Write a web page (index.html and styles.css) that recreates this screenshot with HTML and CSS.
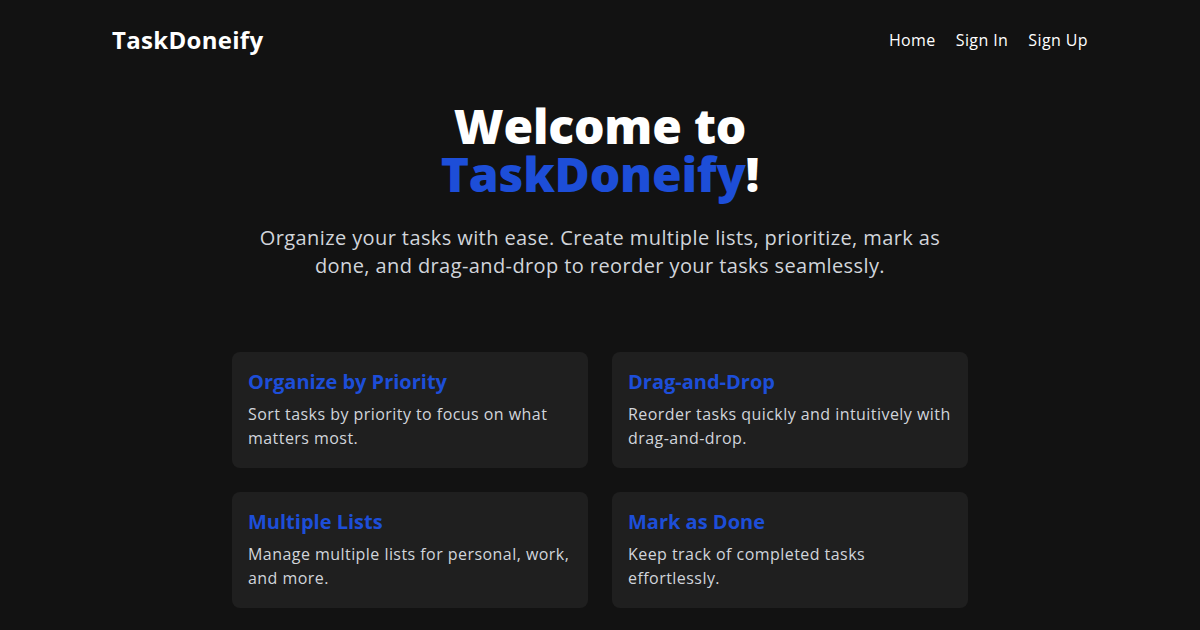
FILE: index.html
```html
<!DOCTYPE html>
<html lang="en">
<head>
<meta charset="utf-8">
<title>TaskDoneify</title>
<link rel="stylesheet" href="styles.css">
</head>
<body>
<header class="header">
  <div class="logo">TaskDoneify</div>
  <nav class="nav">
    <a href="#">Home</a>
    <a href="#">Sign In</a>
    <a href="#">Sign Up</a>
  </nav>
</header>
<main class="hero">
  <h1 class="title"><span class="line">Welcome to</span><span class="line"><span class="brand">TaskDoneify</span>!</span></h1>
  <p class="lead">Organize your tasks with ease. Create multiple lists, prioritize, mark as done, and drag-and-drop to reorder your tasks seamlessly.</p>
  <section class="features">
    <div class="card">
      <h2>Organize by Priority</h2>
      <p>Sort tasks by priority to focus on what matters most.</p>
    </div>
    <div class="card">
      <h2>Drag-and-Drop</h2>
      <p>Reorder tasks quickly and intuitively with drag-and-drop.</p>
    </div>
    <div class="card">
      <h2>Multiple Lists</h2>
      <p>Manage multiple lists for personal, work, and more.</p>
    </div>
    <div class="card">
      <h2>Mark as Done</h2>
      <p>Keep track of completed tasks effortlessly.</p>
    </div>
  </section>
</main>
</body>
</html>
```
FILE: styles.css
```css
* { box-sizing: border-box; }
html, body { margin: 0; padding: 0; }
body {
  background: #121212;
  color: #ffffff;
  font-family: "Open Sans", "DejaVu Sans", sans-serif;
  width: 1200px;
  height: 630px;
  overflow: hidden;
}
.header {
  width: 976px;
  margin: 0 auto;
  padding-top: 24px;
  height: 64px;
  display: flex;
  justify-content: space-between;
  align-items: flex-start;
}
.logo {
  font-size: 24px;
  font-weight: 700;
  line-height: 32px;
  letter-spacing: 0.3px;
}
.nav {
  display: flex;
  gap: 20px;
  line-height: 32px;
}
.nav a {
  color: #ffffff;
  text-decoration: none;
  font-size: 16px;
  letter-spacing: 0.4px;
}
.hero {
  display: flex;
  flex-direction: column;
  align-items: center;
  padding-top: 38px;
}
.title {
  margin: 0;
  font-size: 48px;
  font-weight: 800;
  text-align: center;
  letter-spacing: -0.2px;
  display: flex;
  flex-direction: column;
  align-items: center;
}
.title .line {
  display: block;
  line-height: 48px;
  height: 48px;
}
.brand { color: #1d4ed8; }
.lead {
  margin: 26px 0 0;
  width: 710px;
  text-align: center;
  font-size: 20px;
  line-height: 28px;
  color: #d1d5db;
  letter-spacing: 0.4px;
}
.features {
  margin-top: 72px;
  display: grid;
  grid-template-columns: 356px 356px;
  gap: 24px;
}
.card {
  background: #1f1f1f;
  border-radius: 8px;
  padding: 16px;
  height: 116px;
}
.card h2 {
  margin: 0 0 6px;
  font-size: 20px;
  line-height: 28px;
  font-weight: 700;
  color: #1d4ed8;
}
.card p {
  margin: 0;
  font-size: 16px;
  line-height: 24px;
  color: #d1d5db;
  letter-spacing: 0.45px;
}
```
